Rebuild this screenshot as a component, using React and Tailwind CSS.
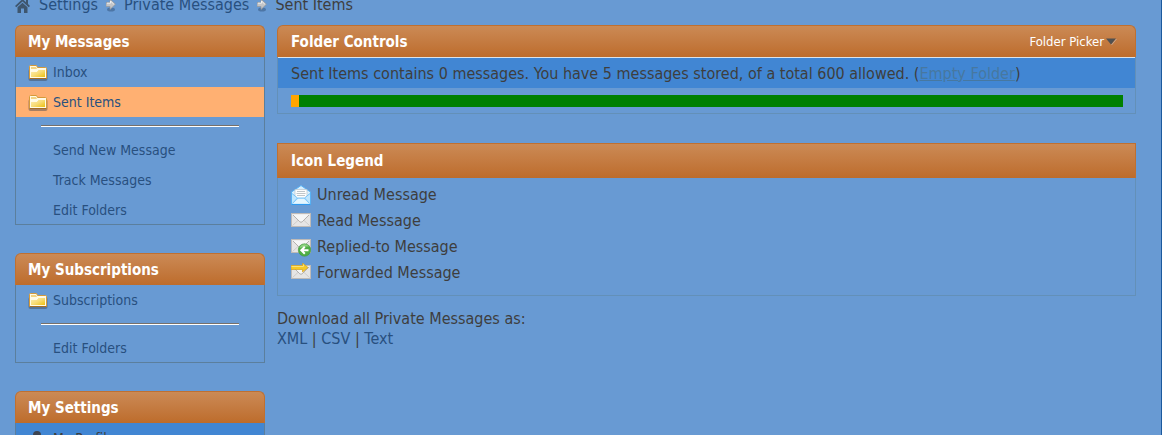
const TrailArrow = () => (
  <svg width="10" height="13" viewBox="0 0 10 13" aria-hidden="true">
    <ellipse cx="5" cy="10.500" rx="4" ry="2" fill="#3c5f89" opacity="0.6" />
    <path d="M0 3.500h4V0L9.500 5.200 4 10.500V7.500H0z" fill="#c3c5c8" stroke="#92969c" strokeWidth="0.7" />
    <path d="M4.500 2v2.200H1M5 2.500l2.800 2.700" fill="none" stroke="#f0f0f0" />
  </svg>
);

const HomeIcon = () => (
  <svg width="16" height="15" viewBox="0 0 16 15" fill="#3e566f" aria-hidden="true">
    <path d="M7.500 1 0 8l1.300 1.300L7.500 3.600l6.200 5.700L15 8l-2-2V2h-2v2.200z" />
    <path d="M2.500 9.300 7.500 4.800l5 4.500V15H9v-4.500H6V15H2.500z" />
  </svg>
);

const FolderIcon = () => (
  <svg width="20" height="17" viewBox="0 0 20 17" className="shrink-0" aria-hidden="true">
    <defs>
      <linearGradient id="folderFill" x1="0" y1="0" x2="1" y2="1">
        <stop offset="0" stopColor="#fdeeb4" />
        <stop offset="0.5" stopColor="#f8dc78" />
        <stop offset="1" stopColor="#edc010" />
      </linearGradient>
    </defs>
    <rect x="0.5" y="5" width="19" height="12" rx="2" fill="#3f4550" opacity="0.45" />
    <path d="M1.500 2.500q0-1 1-1h6l1 2h8q1 0 1 1v10h-17z" fill="#fffbe6" stroke="#d59a3a" />
    <path d="M3 3h5l1 2H3z" fill="#f3d483" />
    <path d="M3 7.500h6l1.500-2H17V13H3z" fill="url(#folderFill)" />
    <path d="M3 7.300h6l1.500-2H17" fill="none" stroke="#fffdf0" />
    <path d="M1.500 14.500h17" stroke="#a66d24" />
  </svg>
);

const ProfileIcon = () => (
  <svg width="20" height="17" viewBox="0 0 20 17" fill="#3d4450" className="shrink-0" aria-hidden="true">
    <circle cx="9" cy="5" r="4" />
    <path d="M2 17c0-5 3-8 7-8s7 3 7 8z" />
  </svg>
);

const Envelope = () => (
  <>
    <rect x="0.5" y="2.500" width="19" height="13" fill="#e6e5e5" stroke="#bfbbb8" />
    <path d="M1.500 14.500 7.500 9M18.500 14.500l-6-5.500" stroke="#cfcdcb" fill="none" />
    <path d="M1.500 3.500h17L10 11.500z" fill="#f6f6f6" />
    <path d="M2 4 8.800 10.800q1.200 1 2.400 0L18 4" fill="none" stroke="#b3b0ae" />
  </>
);

const UnreadIcon = () => (
  <svg width="20" height="20" viewBox="0 0 20 20" className="shrink-0" aria-hidden="true">
    <path d="M.5 7 10 .5 19.500 7v12.500H.5z" fill="#d6efff" stroke="#58b2f4" />
    <path d="M4 4.500h12v8l-6 3-6-3z" fill="#fdfdfd" stroke="#b9c4cc" strokeWidth="0.7" />
    <path d="M6 6.500h8M5.500 8.500h9M6 10.500h8" stroke="#c0c6ca" />
    <path d="M1 8.500 6.500 13h7L19 8.500V19H1z" fill="#bfe6ff" />
    <path d="M1 8.500 6.500 13h7L19 8.500M1.500 18.500l5-5.500M18.500 18.500l-5-5.500" fill="none" stroke="#6dbdf7" strokeWidth="0.9" />
    <path d="M2 18.500 7 14h6l5 4.500z" fill="#e4f6ff" />
    <path d="M.5 19.500h19" stroke="#2f9af0" />
  </svg>
);

const ReadIcon = () => (
  <svg width="20" height="20" viewBox="0 0 20 20" className="shrink-0" aria-hidden="true">
    <Envelope />
  </svg>
);

const RepliedIcon = () => (
  <svg width="20" height="20" viewBox="0 0 20 20" className="shrink-0" aria-hidden="true">
    <Envelope />
    <circle cx="13.500" cy="13" r="6.200" fill="#4fae45" stroke="#45993f" strokeWidth="0.6" />
    <path d="M8.500 11a5.400 5.400 0 0 1 9.500-1.500q-5-.5-9.500 1.500z" fill="#8ed281" />
    <path d="M17.500 13.300H11M13.800 9.800l-3.500 3.500 3.500 3.500" stroke="#fff" strokeWidth="2" fill="none" />
  </svg>
);

const ForwardedIcon = () => (
  <svg width="20" height="20" viewBox="0 0 20 20" className="shrink-0" aria-hidden="true">
    <Envelope />
    <path d="M0 2.500h11.500V0l5.500 4.500-5.500 4.500V6.500H0z" fill="#f6c927" stroke="#d3a022" strokeWidth="0.7" />
    <path d="M.5 3.500h12v-2" fill="none" stroke="#fbe27a" />
  </svg>
);

const menus = [
  {
    title: 'My Messages',
    folders: [{ name: 'Inbox' }, { name: 'Sent Items', active: true }],
    actions: ['Send New Message', 'Track Messages', 'Edit Folders'],
  },
  {
    title: 'My Subscriptions',
    folders: [{ name: 'Subscriptions' }],
    actions: ['Edit Folders'],
  },
];

const legend = [
  { label: 'Unread Message', Icon: UnreadIcon },
  { label: 'Read Message', Icon: ReadIcon },
  { label: 'Replied-to Message', Icon: RepliedIcon },
  { label: 'Forwarded Message', Icon: ForwardedIcon },
];

const MenuTitle = ({ children }) => (
  <h2 className="flex h-8 items-center rounded-t-md border border-b-0 border-[#bf7031] bg-linear-to-b from-[#cb8a55] to-[#bd6c2b] px-3 text-[15px] font-bold text-white">
    {children}
  </h2>
);

const MenuPanel = ({ title, folders, actions }) => (
  <section>
    <MenuTitle>{title}</MenuTitle>
    <div className="border border-t-0 border-[#5b7f9d]">
      {folders.map(({ name, active }) => (
        <a key={name} href="#" className={`flex h-[30px] items-center gap-[5px] px-3 ${active ? 'bg-[#ffb072]' : ''}`}>
          <FolderIcon />
          {name}
        </a>
      ))}
      <hr className="mx-[25px] my-2 border-t border-b border-t-[#77706a] border-b-white" />
      {actions.map((name, i) => (
        <a key={name} href="#" className={`flex items-center pl-[37px] ${i === actions.length - 1 ? 'h-[29px]' : 'h-[30px]'}`}>
          {name}
        </a>
      ))}
    </div>
  </section>
);

export default function App() {
  return (
    <div className="flex h-screen flex-col overflow-hidden border-r border-[#1c5a9e] bg-[#689ad3] pr-[25px] pl-[15px] font-['DejaVu_Sans_Condensed','Noto_Sans',sans-serif] text-[16px] leading-5 text-[#3e3e3e]">
      <nav aria-label="Breadcrumb" className="-mt-[5px] mb-2.5 flex h-5 shrink-0 items-center gap-2 text-[#28507f]">
        <a href="#" aria-label="Home"><HomeIcon /></a>
        <a href="#">Settings</a>
        <TrailArrow />
        <a href="#">Private Messages</a>
        <TrailArrow />
        <span className="text-[#3e3e3e]">Sent Items</span>
      </nav>

      <div className="flex items-start gap-3">
        <aside className="flex w-[250px] shrink-0 flex-col gap-7 text-[14px] text-[#28507f]">
          {menus.map((menu) => (
            <MenuPanel key={menu.title} {...menu} />
          ))}
          <section>
            <MenuTitle>My Settings</MenuTitle>
            <div className="border border-t-0 border-[#5b7f9d] bg-[#4186d3]">
              <a href="#" className="flex h-[30px] items-center gap-[5px] px-3 text-[#3e3e3e]">
                <ProfileIcon />
                My Profile
              </a>
            </div>
          </section>
        </aside>

        <main className="min-w-0 flex-1">
          <section>
            <div className="flex h-8 items-center justify-between rounded-t-md border border-b-0 border-[#bf7031] bg-linear-to-b from-[#cb8a55] to-[#bd6c2b] pr-[18px] pl-[13px] text-white">
              <h2 className="text-[15px] font-bold">Folder Controls</h2>
              <button type="button" className="flex items-center gap-0.5 text-[13px]">
                Folder Picker
                <svg width="11" height="8" viewBox="0 0 11 8" aria-hidden="true">
                  <path d="M0 .5h10L5 6.500z" fill="#505050" />
                  <path d="M10.500 1 5.500 7" stroke="#c6a58f" />
                </svg>
              </button>
            </div>
            <div className="border border-t-0 border-[#6390b8]">
              <p className="border-t border-[#dbe3ea] bg-[#4186d3] px-[13px] pt-1.5 pb-1">
                Sent Items contains 0 messages. You have 5 messages stored, of a total 600 allowed. (
                <a href="#" className="text-[#4778a0] underline">Empty Folder</a>)
              </p>
              <div className="pt-[7px] pr-3 pb-1.5 pl-[13px]">
                <div className="h-3 bg-[#008000]">
                  <div className="h-3 w-[1%] bg-[#ffa500]" />
                </div>
              </div>
            </div>
          </section>

          <section className="mt-[29px]">
            <h2 className="flex h-[35px] items-center border border-b-0 border-[#bf7031] bg-linear-to-b from-[#cb8a55] to-[#bd6c2b] px-[13px] text-[15px] font-bold text-white">
              Icon Legend
            </h2>
            <ul className="border border-t-0 border-[#6390b8] px-[13px] pt-1 pb-[9px]">
              {legend.map(({ label, Icon }) => (
                <li key={label} className="flex h-[26px] items-center gap-1.5">
                  <Icon />
                  {label}
                </li>
              ))}
            </ul>
          </section>

          <div className="mt-[13px]">
            <p>Download all Private Messages as:</p>
            <p>
              <a href="#" className="text-[#28507f]">XML</a> | <a href="#" className="text-[#28507f]">CSV</a> |{' '}
              <a href="#" className="text-[#28507f]">Text</a>
            </p>
          </div>
        </main>
      </div>
    </div>
  );
}
